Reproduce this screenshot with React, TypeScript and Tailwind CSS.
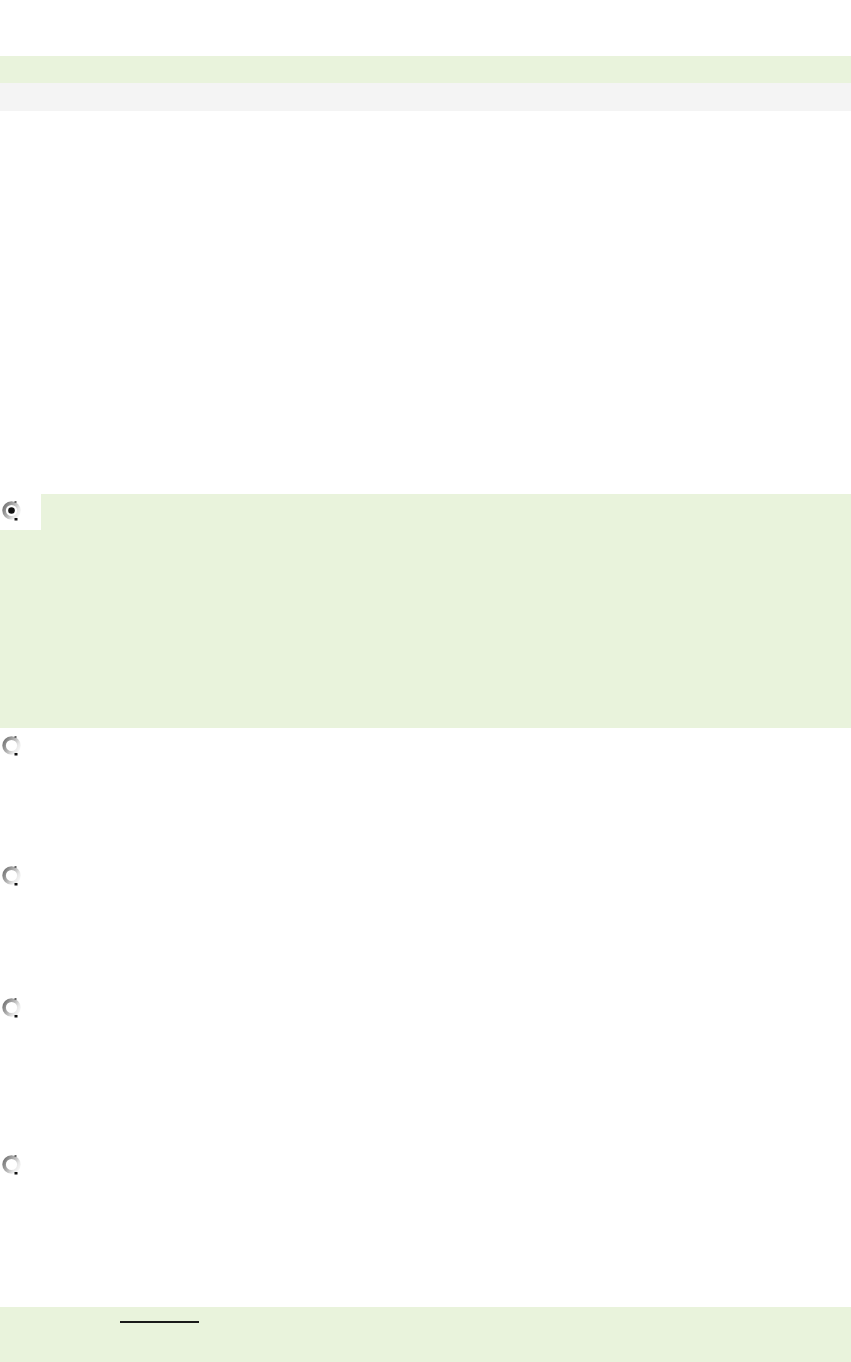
import React from 'react'

function Radio({ checked }: { checked?: boolean }) {
  const id = checked ? 'rg-on' : 'rg-off'
  return (
    <svg width="21" height="21" viewBox="0 0 21 21" className="block">
      <defs>
        <linearGradient id={id} x1="0" y1="0.2" x2="1" y2="0.8">
          <stop offset="0" stopColor="#7a7a7a" />
          <stop offset="0.45" stopColor="#b4b4b4" />
          <stop offset="0.8" stopColor="#e8e8e8" />
          <stop offset="1" stopColor="#f4f4f4" />
        </linearGradient>
      </defs>
      <circle cx="10.5" cy="10.5" r="7.4" fill="#ffffff" stroke={`url(#${id})`} strokeWidth="3.6" />
      <rect x="13.5" y="18" width="3" height="2.5" fill="#111" />
      <rect x="13.5" y="1" width="2" height="2" fill="#666" />
      {checked && <circle cx="10.5" cy="10.5" r="3.3" fill="#111" />}
    </svg>
  )
}

interface OptionRowProps {
  checked?: boolean
  heightClass: string
}

function OptionRow({ checked, heightClass }: OptionRowProps) {
  if (checked) {
    return (
      <div className={`flex bg-[#e9f3dc] ${heightClass}`}>
        <div className="h-[36px] w-[41px] bg-white pl-[1px] pt-[6px]">
          <Radio checked />
        </div>
      </div>
    )
  }
  return (
    <div className={`bg-white pl-[1px] pt-[7px] ${heightClass}`}>
      <Radio />
    </div>
  )
}

export default function App() {
  return (
    <div className="flex h-[1362px] w-[851px] flex-col bg-white font-['Liberation_Sans',sans-serif]">
      {/* header strips */}
      <div className="h-[56px]" />
      <div className="h-[27px] bg-[#e9f3dc]" />
      <div className="h-[28px] bg-[#f4f4f4]" />

      {/* empty content area */}
      <div className="h-[383px]" />

      {/* answer options */}
      <OptionRow checked heightClass="h-[234px]" />
      <OptionRow heightClass="h-[130px]" />
      <OptionRow heightClass="h-[132px]" />
      <OptionRow heightClass="h-[155px]" />
      <div className="h-[162px] bg-white pl-[1px] pt-[9px]">
        <Radio />
      </div>

      {/* footer */}
      <div className="flex-1 bg-[#e9f3dc] pl-[120px] pt-[14px]">
        <div className="h-[2px] w-[79px] bg-[#1a1a1a]" />
      </div>
    </div>
  )
}
